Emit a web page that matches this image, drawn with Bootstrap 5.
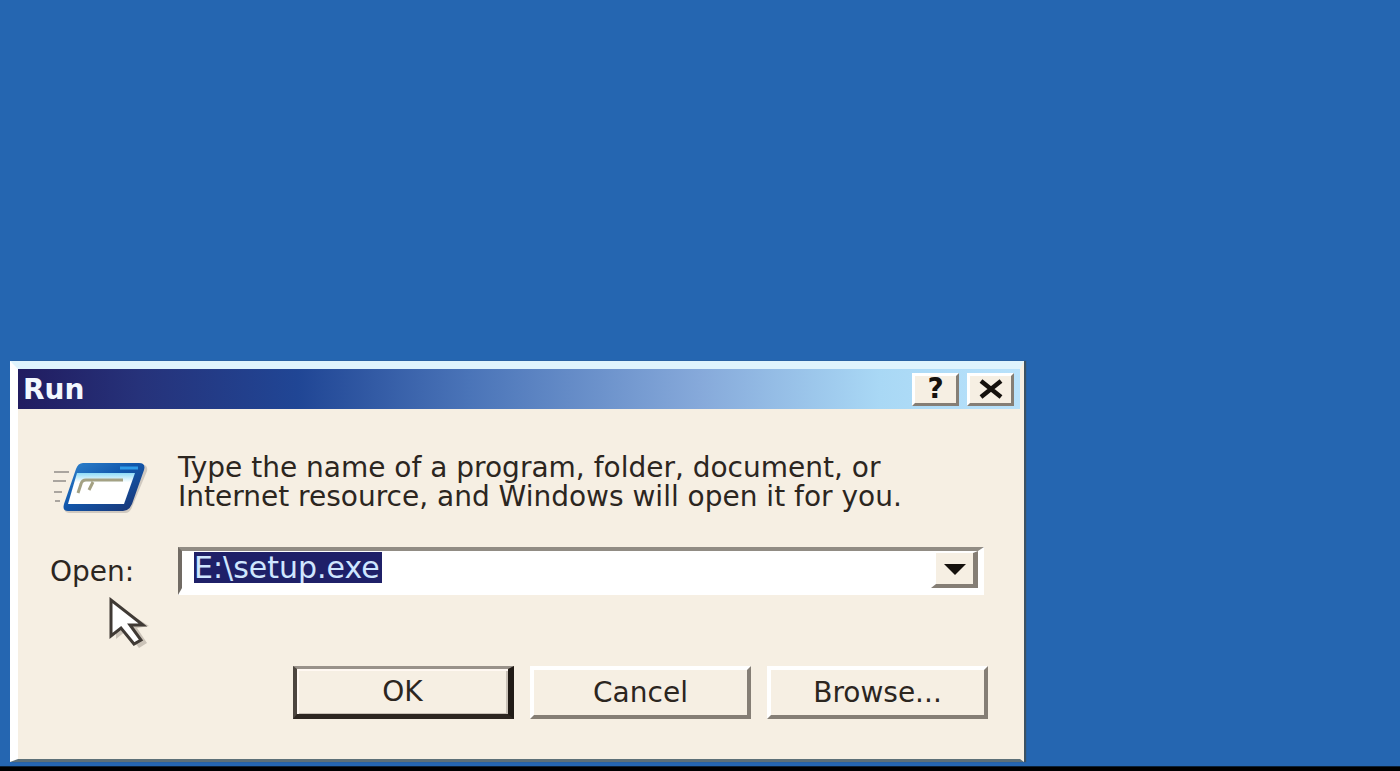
<!DOCTYPE html>
<html lang="en">
<head>
<meta charset="utf-8">
<meta name="viewport" content="width=device-width, initial-scale=1">
<title>Run</title>
<link rel="stylesheet" href="https://cdn.jsdelivr.net/npm/bootstrap@5.3.0/dist/css/bootstrap.min.css">
<style>
  :root { --face: #f6efe3; --ink: #2c261f; --shade: #857e75; --desk: #2566b1; }
  body { background: var(--desk); font-family: "DejaVu Sans", Verdana, sans-serif; font-size: 28px; line-height: 29px; color: var(--ink); }
  .taskbar-edge { height: 5px; background: #000; border-top: 1px solid #0b2137; }
  .run-window { max-width: 1014px; margin-left: 10px; background: var(--face); border: solid; border-width: 8px 4px 3px 8px; border-color: #dff4fd var(--face) #5d7078 #fff; box-shadow: 2px 0 1px #3c5263; }
  .titlebar { height: 40px; padding-left: 5px; padding-right: 6px; background: linear-gradient(90deg, #211c60 0%, #26327a 12%, #204695 28%, #4a74b8 45%, #86a9da 68%, #a9d8f5 86%, #b9e2fb 100%); }
  .titlebar h1 { font-size: 28px; line-height: 29px; color: #f2f8ff; }
  .cap-btn { width: 47px; height: 33px; color: #15110d; background: var(--face); border: 3px solid; border-color: #fff var(--shade) var(--shade) #fff; font-size: 28px; line-height: 26px; }
  .run-body { padding: 44px 32px 40px 32px; }
  .icon-col { width: 128px; }
  .combo { height: 48px; background: #fff; border: solid; border-width: 4px 6px 7px 4px; border-color: #918c84 #fff #fff #716b64; padding-left: 12px; }
  .combo input { width: 188px; height: 31px; margin-top: 1px; background: #1f2068; color: #cfe6ff; outline: 0; font-size: 30px; line-height: 31px; }
  .drop-btn { width: 47px; background: var(--face); border: solid; border-width: 2px 5px 4px 5px; border-color: #fff var(--shade) var(--shade) #fff; }
  .actions { gap: 16px; margin-top: 71px; }
  .face-btn { width: 221px; height: 53px; color: var(--ink); background: var(--face); border: 4px solid; border-color: #fff var(--shade) var(--shade) #fff; }
  .face-btn.default-btn { border-width: 3px 6px 5px 4px; border-color: #99928a #211b16 #2d2620 #4d463f; box-shadow: inset 2px 2px #fff8f2, inset -2px -1px #c9c1b7; }
  .pointer { left: 90px; top: 188px; }
</style>
</head>
<body>
<div class="min-vh-100 d-flex flex-column justify-content-end">
  <main class="run-window" role="dialog" aria-labelledby="run-title">
    <header class="titlebar d-flex align-items-center">
      <h1 id="run-title" class="fw-bold m-0 me-auto">Run</h1>
      <div class="d-flex gap-2">
        <button type="button" class="cap-btn p-0 fw-bold d-flex align-items-center justify-content-center" aria-label="Help">?</button>
        <button type="button" class="cap-btn p-0 d-flex align-items-center justify-content-center" aria-label="Close">
          <svg width="26" height="20" viewBox="0 0 26 20" aria-hidden="true"><path d="M3 2 23 18M23 2 3 18" stroke="#15110d" stroke-width="4.5"/></svg>
        </button>
      </div>
    </header>
    <form class="run-body position-relative">
      <div class="d-flex">
        <div class="icon-col flex-shrink-0 pt-1">
          <svg width="100" height="62" viewBox="0 0 100 62" aria-hidden="true">
            <defs>
              <linearGradient id="frame" x1="0" y1="0" x2="1" y2="1"><stop offset="0" stop-color="#3186cf"/><stop offset=".45" stop-color="#1157ac"/><stop offset="1" stop-color="#1c326e"/></linearGradient>
              <linearGradient id="pane" x1="0" y1="0" x2="0" y2="1"><stop offset="0" stop-color="#8fdcf8"/><stop offset=".3" stop-color="#fff"/></linearGradient>
            </defs>
            <path d="M4 15h15M3 24h13M4 35h8M5 44h5" stroke="#aaa59f" stroke-width="2"/>
            <path d="M34 8h60q4 1 3 6L82 50q-2 6-7 6H19q-6-1-4-6L27 13q2-5 7-5Z" fill="#a9a49e" opacity=".5"/>
            <path d="M33 6h56q7 0 5 7L82 47q-3 7-9 7H18q-6 0-4-7L26 12q2-6 7-6Z" fill="url(#frame)"/>
            <path d="M27 16h58L74 47H18Z" fill="url(#pane)"/>
            <path d="M70 11h18" stroke="#2f9be8" stroke-width="3"/>
            <path d="M73 23H36q-4 0-5 4l-3 9M43 25l-4 8" fill="none" stroke="#a4a183" stroke-width="3"/>
          </svg>
        </div>
        <p class="mb-0 flex-grow-1">Type the name of a program, folder, document, or<br>Internet resource, and Windows will open it for you.</p>
      </div>
      <div class="d-flex align-items-center mt-4 pt-1">
        <label for="command" class="icon-col flex-shrink-0">Open:</label>
        <div class="combo d-flex flex-grow-1 me-1">
          <input id="command" type="text" class="border-0 p-0 me-auto" value="E:\setup.exe" autocomplete="off" spellcheck="false">
          <button type="button" class="drop-btn p-0 d-flex align-items-center justify-content-center" aria-label="Show recent commands">
            <svg width="22" height="12" viewBox="0 0 22 12" aria-hidden="true"><path d="M0 1h22L11 12Z" fill="#15110d"/></svg>
          </button>
        </div>
      </div>
      <div class="actions d-flex justify-content-end">
        <button type="submit" class="face-btn default-btn p-0">OK</button>
        <button type="button" class="face-btn p-0">Cancel</button>
        <button type="button" class="face-btn p-0">Browse...</button>
      </div>
      <svg class="pointer position-absolute" width="44" height="56" viewBox="0 0 44 56" aria-hidden="true">
        <path d="M8 8v34l10-8 13 17 8-5-10-15 12-2Z" fill="#8b8379" opacity=".4"/>
        <path d="M3 3v36l10-8 13 16 7-4-11-15h13Z" fill="#fff" stroke="#403a35" stroke-width="3"/>
      </svg>
    </form>
  </main>
  <div class="taskbar-edge mt-1"></div>
</div>
<script src="https://cdn.jsdelivr.net/npm/bootstrap@5.3.0/dist/js/bootstrap.bundle.min.js"></script>
</body>
</html>
